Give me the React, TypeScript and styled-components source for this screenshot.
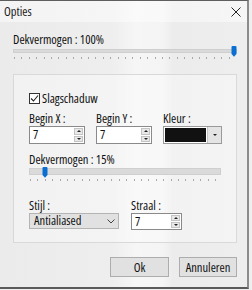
import React from "react";
import styled, { createGlobalStyle } from "styled-components";

const Global = createGlobalStyle`
  html, body { margin: 0; padding: 0; background: #efefef; }
  body {
    font-family: "Open Sans", "Noto Sans", sans-serif;
    font-stretch: 75%;
    font-size: 12.5px;
    color: #111;
  }
  * { box-sizing: border-box; }
`;

const Window = styled.div`
  width: 249px;
  height: 289px;
  border-top: 1px solid #5e5e5e;
  border-right: 2px solid #8c8c8c;
  border-bottom: 2px solid #5a5a5a;
  background: linear-gradient(
    90deg,
    #ebebeb 0%,
    #eeeeee 45%,
    #f6f6f6 55%,
    #f4f4f4 66%,
    #ececec 70%,
    #eeeeee 100%
  );
  display: flex;
  flex-direction: column;
`;

const TitleBar = styled.div`
  height: 21px;
  display: flex;
  align-items: center;
  justify-content: space-between;
  padding: 0 6px 0 4px;
  background: rgba(255, 255, 255, 0.45);
`;

const Title = styled.span`
  line-height: 15px;
  color: #1a1a1a;
`;

const Close = styled.svg`
  width: 10px;
  height: 10px;
`;

const Content = styled.div`
  display: flex;
  flex-direction: column;
  padding: 0 10px 0 13px;
`;

const Label = styled.div<{ $mt?: number }>`
  margin-top: ${(p) => p.$mt ?? 0}px;
  line-height: 15px;
  height: 15px;
  white-space: nowrap;
`;

const SliderBox = styled.div<{ $mt?: number; $w?: number }>`
  position: relative;
  height: 16px;
  margin-top: ${(p) => p.$mt ?? 0}px;
  width: ${(p) => (p.$w ? `${p.$w}px` : "auto")};
`;

const Track = styled.div<{ $h: number; $top: number }>`
  margin-top: ${(p) => p.$top}px;
  height: ${(p) => p.$h}px;
  background: #dadada;
  border: 1px solid #cfcfcf;
`;

const Ticks = styled.div<{ $top: number }>`
  position: absolute;
  left: 1px;
  right: 1px;
  top: ${(p) => p.$top}px;
  height: 2px;
  background: repeating-linear-gradient(
    90deg,
    #a9a9a9 0 1px,
    transparent 1px 7.4px
  );
`;

const Thumb = styled.svg`
  position: absolute;
  top: 0;
  width: 6px;
  height: 11px;
`;

const Slider: React.FC<{
  value: number;
  trackH: number;
  trackTop: number;
  tickTop: number;
  mt?: number;
  w?: number;
}> = ({ value, trackH, trackTop, tickTop, mt, w }) => (
  <SliderBox $mt={mt} $w={w}>
    <Track $h={trackH} $top={trackTop} />
    <Ticks $top={tickTop} />
    <Thumb
      viewBox="0 0 6 11"
      style={{ left: `calc(${value}% - ${(value / 100) * 6}px)` }}
    >
      <path
        d="M0.5 1 Q0.5 0 1.5 0 H4.5 Q5.5 0 5.5 1 V8 L3 10.8 L0.5 8 Z"
        fill="#0a6fd1"
      />
    </Thumb>
  </SliderBox>
);

const Group = styled.div`
  margin-top: 12px;
  border: 1px solid #d9d9d9;
  background: rgba(255, 255, 255, 0.35);
  padding: 0 15px 12px 15px;
  display: flex;
  flex-direction: column;
`;

const CheckRow = styled.label`
  margin-top: 17px;
  height: 13px;
  line-height: 13px;
  display: flex;
  align-items: center;
  gap: 2px;
`;

const Box = styled.span`
  width: 11px;
  height: 11px;
  border: 1px solid #333;
  background: #fff;
  display: flex;
  align-items: center;
  justify-content: center;
`;

const FieldRow = styled.div<{ $mt: number; $cols: string; $gap: number }>`
  margin-top: ${(p) => p.$mt}px;
  display: grid;
  grid-template-columns: ${(p) => p.$cols};
  column-gap: ${(p) => p.$gap}px;
`;

const Field = styled.div`
  display: flex;
  flex-direction: column;
`;

const FieldLabel = styled.div`
  line-height: 14px;
  height: 14px;
  white-space: nowrap;
`;

const SpinBox = styled.div<{ $h: number }>`
  height: ${(p) => p.$h}px;
  border: 1px solid #8a8a8a;
  background: #fff;
  display: flex;
  align-items: stretch;
`;

const SpinText = styled.div`
  flex: 1;
  padding-left: 3px;
  line-height: 15px;
`;

const SpinButtons = styled.div`
  width: 9px;
  margin: 1px 1px 1px 0;
  display: flex;
  flex-direction: column;
  gap: 1px;
`;

const SpinBtn = styled.div`
  flex: 1;
  background: #e8e8e8;
  border: 1px solid #c4c4c4;
  display: flex;
  align-items: center;
  justify-content: center;
`;

const Tri = styled.span<{ $up?: boolean }>`
  width: 0;
  height: 0;
  border-left: 2px solid transparent;
  border-right: 2px solid transparent;
  ${(p) =>
    p.$up ? "border-bottom: 2px solid #222;" : "border-top: 2px solid #222;"}
`;

const Spin: React.FC<{ value: string; h: number }> = ({ value, h }) => (
  <SpinBox $h={h}>
    <SpinText>{value}</SpinText>
    <SpinButtons>
      <SpinBtn>
        <Tri $up />
      </SpinBtn>
      <SpinBtn>
        <Tri />
      </SpinBtn>
    </SpinButtons>
  </SpinBox>
);

const ColorBox = styled.div`
  height: 18px;
  border: 1px solid #9a9a9a;
  background: #fff;
  display: flex;
`;

const Swatch = styled.div`
  flex: 1;
  margin: 1px;
  background: #111;
`;

const ColorBtn = styled.div`
  width: 14px;
  background: #e4e4e4;
  border-left: 1px solid #c4c4c4;
  display: flex;
  align-items: center;
  justify-content: center;
`;

const Select = styled.div`
  height: 16px;
  border: 1px solid #b4b4b4;
  background: #e1e1e1;
  display: flex;
  align-items: center;
  justify-content: space-between;
  padding: 0 3px 0 4px;
  line-height: 14px;
`;

const Buttons = styled.div`
  margin-top: 14px;
  display: flex;
  justify-content: flex-end;
  gap: 10px;
`;

const Button = styled.button<{ $w: number }>`
  width: ${(p) => p.$w}px;
  height: 20px;
  border: 1px solid #adadad;
  background: #e1e1e1;
  font-family: inherit;
  font-stretch: inherit;
  font-size: inherit;
  color: #111;
  padding: 0;
`;

export default function App() {
  return (
    <>
      <Global />
      <Window>
        <TitleBar>
          <Title>Opties</Title>
          <Close viewBox="0 0 10 10">
            <path
              d="M0.5 0.5 L9.5 9.5 M9.5 0.5 L0.5 9.5"
              stroke="#222"
              strokeWidth="1"
            />
          </Close>
        </TitleBar>
        <Content>
          <Label $mt={10}>Dekvermogen : 100%</Label>
          <Slider value={100} trackH={4} trackTop={3} tickTop={11} mt={-1} />
          <Group>
            <CheckRow>
              <Box>
                <svg width="9" height="9" viewBox="0 0 9 9">
                  <path
                    d="M1 4.5 L3.5 7 L8 1.5"
                    stroke="#222"
                    strokeWidth="1.1"
                    fill="none"
                  />
                </svg>
              </Box>
              Slagschaduw
            </CheckRow>
            <FieldRow $mt={7} $cols="56px 56px 59px" $gap={11}>
              <Field>
                <FieldLabel>Begin X :</FieldLabel>
                <Spin value="7" h={18} />
              </Field>
              <Field>
                <FieldLabel>Begin Y :</FieldLabel>
                <Spin value="7" h={18} />
              </Field>
              <Field>
                <FieldLabel>Kleur :</FieldLabel>
                <ColorBox>
                  <Swatch />
                  <ColorBtn>
                    <Tri />
                  </ColorBtn>
                </ColorBox>
              </Field>
            </FieldRow>
            <Label $mt={8}>Dekvermogen : 15%</Label>
            <Slider value={7} trackH={7} trackTop={1} tickTop={12} mt={0} w={192} />
            <FieldRow $mt={16} $cols="90px 51px" $gap={12}>
              <Field>
                <FieldLabel>Stijl :</FieldLabel>
                <Select>
                  Antialiased
                  <svg width="8" height="5" viewBox="0 0 8 5">
                    <path
                      d="M0.5 0.5 L4 4 L7.5 0.5"
                      stroke="#444"
                      strokeWidth="1"
                      fill="none"
                    />
                  </svg>
                </Select>
              </Field>
              <Field>
                <FieldLabel>Straal :</FieldLabel>
                <Spin value="7" h={17} />
              </Field>
            </FieldRow>
          </Group>
          <Buttons>
            <Button $w={59}>Ok</Button>
            <Button $w={58}>Annuleren</Button>
          </Buttons>
        </Content>
      </Window>
    </>
  );
}
